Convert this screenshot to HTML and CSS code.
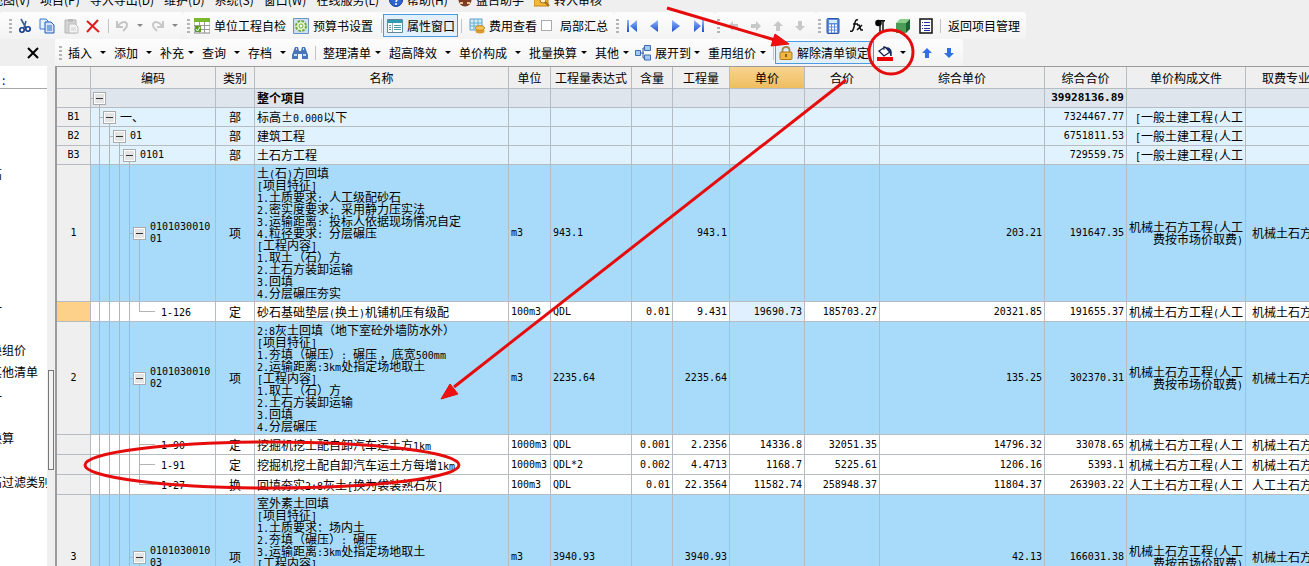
FILE: index.html
```html
<!DOCTYPE html>
<html lang="zh-CN">
<head>
<meta charset="utf-8">
<title>工程计价</title>
<link rel="stylesheet" href="styles.css">
</head>
<body>
<svg class="defs" aria-hidden="true">
  <defs>
    <linearGradient id="blue" x1="0" y1="0" x2="0" y2="1"><stop offset="0" stop-color="#8fb8ff"/><stop offset="1" stop-color="#1f50c8"/></linearGradient>
    <symbol id="caret" viewBox="0 0 6 3"><path d="M0 0h6L3 3z" fill="currentColor"/></symbol>
    <symbol id="cut" viewBox="0 0 16 16"><path d="M4 1l5 9M9 3L7 10" stroke="#3c5f8c" stroke-width="1.6" fill="none"/><circle cx="5" cy="12" r="2.2" fill="none" stroke="#12398e" stroke-width="1.6"/><circle cx="11" cy="11" r="2.2" fill="none" stroke="#12398e" stroke-width="1.6"/></symbol>
    <symbol id="copy" viewBox="0 0 16 16"><path d="M1 1h6l2 2v8H1z" fill="#e4f0fd" stroke="#3c78c8"/><path d="M6 4h6l3 3v8H6z" fill="#cfe3fb" stroke="#1c5cb8"/><path d="M8 8h5M8 10h5M8 12h5" stroke="#2c6cc8"/></symbol>
    <symbol id="paste" viewBox="0 0 16 16"><path d="M2 2h11v13H2z" fill="#d4d4d4" stroke="#b4b4b4"/><path d="M5 1h5v3H5z" fill="#bbb"/><path d="M6 6h6l3 3v6H6z" fill="#f4f4f4" stroke="#bdbdbd"/><path d="M8 10h5M8 12h5" stroke="#ccc"/></symbol>
    <symbol id="delete" viewBox="0 0 16 16"><path d="M2 3l12 11M13 2L2 14" stroke="#dc1e1e" stroke-width="2" fill="none"/></symbol>
    <symbol id="undo" viewBox="0 0 16 16"><path d="M2 3v6h6M3 8c3-5 9-5 9-1 0 3-2 4-4 6" stroke="#c4c4c4" stroke-width="2" fill="none"/></symbol>
    <symbol id="redo" viewBox="0 0 16 16"><path d="M13 3v6H7M12 8C9 3 3 3 3 7c0 3 2 4 4 6" stroke="#c8c8c8" stroke-width="2" fill="none"/></symbol>
    <symbol id="check-table" viewBox="0 0 16 16"><path d="M0 1h16v14H0z" fill="#fff" stroke="#888"/><path d="M0 0h16v4H0z" fill="#7cb82c"/><path d="M0 7.500h16M0 11.500h16M5.500 4v11M10.500 4v11" stroke="#999"/><path d="M1 8h6v6H1z" fill="#5aa01c"/><path d="M2 11l1.500 2L6 9" stroke="#fff" fill="none"/></symbol>
    <symbol id="gear" viewBox="0 0 16 16"><path d="M.5 .5h15v15H.5z" fill="#cfe0f4" stroke="#6b93c4"/><circle cx="8" cy="8" r="5" fill="#e7f6cf" stroke="#6cac3c" stroke-width="2" stroke-dasharray="2.600 1.300"/><circle cx="8" cy="8" r="2" fill="#fff" stroke="#6cac3c"/></symbol>
    <symbol id="props" viewBox="0 0 16 14"><path d="M.5 .5h15v13H.5z" fill="#fff" stroke="#62869a"/><path d="M1 1h14v3H1z" fill="#2e9ab4"/><path d="M5.500 4v9" stroke="#9ab"/><path d="M2 6.500h2M2 8.500h2M2 10.500h2M7 6.500h7M7 8.500h7M7 10.500h7" stroke="#4d9cac"/></symbol>
    <symbol id="fees" viewBox="0 0 16 16"><path d="M1 1h12v11H1z" fill="#d8ecfa" stroke="#5da0cc"/><path d="M1 5h12M1 8h12M5 1v11M9 1v11" stroke="#64b0cc"/><ellipse cx="11" cy="13" rx="4.500" ry="2.500" fill="#dc9a2c"/><ellipse cx="11" cy="10" rx="4.500" ry="2.300" fill="#f4c458" stroke="#c4861c"/></symbol>
    <symbol id="first" viewBox="0 0 12 14"><path d="M1 1h2v12H1zM11 1v12L4 7z" fill="url(#blue)"/></symbol>
    <symbol id="prev" viewBox="0 0 12 14"><path d="M9 1v12L1 7z" fill="url(#blue)"/></symbol>
    <symbol id="next" viewBox="0 0 12 14"><path d="M1 1v12l8-6z" fill="url(#blue)"/></symbol>
    <symbol id="last" viewBox="0 0 12 14"><path d="M1 1v12l7-6zM9 1h2v12H9z" fill="url(#blue)"/></symbol>
    <symbol id="left" viewBox="0 0 12 12"><path d="M6 1v3h5v4H6v3L1 6z"/></symbol>
    <symbol id="right" viewBox="0 0 12 12"><path d="M6 1v3H1v4h5v3l5-5z"/></symbol>
    <symbol id="up" viewBox="0 0 12 12"><path d="M6 1L1 6h3v5h4V6h3z"/></symbol>
    <symbol id="down" viewBox="0 0 12 12"><path d="M6 11L1 6h3V1h4v5h3z"/></symbol>
    <symbol id="calc" viewBox="0 0 14 16"><rect x="1" y=".5" width="12" height="15" rx="1" fill="#5c8cdc" stroke="#2c54a4"/><path d="M3 2h8v3H3z" fill="#d4ecff"/><path d="M3 7.500h8M3 10.500h8M3 13.500h8" stroke="#fff" stroke-width="2" stroke-dasharray="2 1"/></symbol>
    <symbol id="fx" viewBox="0 0 14 14"><path d="M8 1C5 0 5 4 4 8s-2 5-4 4M3 5h5M7 6l2 0 2 5 2 0M12 6l-5 5" stroke="#111" stroke-width="1.500" fill="none"/></symbol>
    <symbol id="pilcrow" viewBox="0 0 12 14"><path d="M5 1h6v1.500H5z"/><circle cx="4.500" cy="4" r="3.300"/><path d="M6 1v12M9 1v12" stroke="#111" stroke-width="1.500"/></symbol>
    <symbol id="cube" viewBox="0 0 16 16"><path d="M1 5l4-4h10l-4 4z" fill="#8ccf8c"/><path d="M1 5h10v10H1z" fill="#4c9c58"/><path d="M11 5l4-4v10l-4 4z" fill="#1c6434"/></symbol>
    <symbol id="list" viewBox="0 0 14 16"><path d="M1 1h12v14H1z" fill="#fff" stroke="#111" stroke-width="1.500"/><path d="M3 4.500h1M3 7.500h1M3 10.500h1M5 4.500h6M5 7.500h6M5 10.500h6M5 12.500h6" stroke="#2030a0"/></symbol>
    <symbol id="find" viewBox="0 0 16 14"><path d="M3 1h3l1 4h2l1-4h3l3 8v4h-6V8H6v5H0V9z" fill="#4874b8"/><path d="M2 9h3M11 9h3M4 3h1M11 3h1" stroke="#c8dcf8" stroke-width="2"/></symbol>
    <symbol id="tree" viewBox="0 0 16 16"><path d="M5 8h4M8 3v10M8 3h2M8 13h2" stroke="#345c9c" fill="none"/><path d="M.5 5.500h5v5h-5zM9.500 .5h6v5h-6zM9.500 10h6v5h-6z" fill="#a4c8f8" stroke="#3c6cb8"/></symbol>
    <symbol id="lock" viewBox="0 0 14 14"><path d="M3.500 7V4c0-4 7-4 7 0v3" stroke="#a08850" stroke-width="1.800" fill="none"/><rect x="1" y="6" width="12" height="7.500" rx="1" fill="#f0b840" stroke="#b07c20"/><path d="M7 8v3" stroke="#70480c" stroke-width="1.600"/></symbol>
    <symbol id="bucket" viewBox="0 0 16 16"><path d="M2 6l6-4 5 5-6 4z" fill="#fff" stroke="#14204c" stroke-width="1.300"/><path d="M7 5V1M9 3c4-1 6 2 5 8-1-4-2-5-5-8z" fill="#14308c" stroke="#14204c"/><path d="M0 12h16v4H0z" fill="#f00000"/></symbol>
    <symbol id="help" viewBox="0 0 14 14"><circle cx="7" cy="7" r="6.500" fill="#2c64d4" stroke="#163c94"/><path d="M5 5c0-3 4-3 4 0 0 2-2 2-2 4M7 10v2" stroke="#fff" stroke-width="1.500" fill="none"/></symbol>
    <symbol id="robot" viewBox="0 0 14 14"><circle cx="7" cy="7" r="6.500" fill="#7c3c24"/><path d="M2 9h3v2H2zM9 9h3v2H9z" fill="#f4c49c"/></symbol>
    <symbol id="audit" viewBox="0 0 16 14"><path d="M0 2h14v11H0z" fill="#f4b838" stroke="#c4841c"/><circle cx="9" cy="7" r="3" fill="#fff4cc" stroke="#a06c18"/><path d="M11 9l4 4" stroke="#a06c18" stroke-width="2"/></symbol>
  </defs>
</svg>

<div class="app">
  <nav class="menubar">
    <button>视图(V)</button><button>项目(P)</button><button>导入导出(D)</button><button>维护(D)</button><button>系统(S)</button><button>窗口(W)</button><button>在线服务(L)</button><button><svg class="i14"><use href="#help"/></svg>帮助(H)</button><button><svg class="i14"><use href="#robot"/></svg>盘古助手</button><button><svg class="i16"><use href="#audit"/></svg>转入审核</button>
  </nav>

  <div class="toolbar">
    <div class="group g-edit">
      <i class="grip"></i>
      <button aria-label="剪切"><svg class="i16"><use href="#cut"/></svg></button>
      <button aria-label="复制"><svg class="i16"><use href="#copy"/></svg></button>
      <button aria-label="粘贴"><svg class="i16"><use href="#paste"/></svg></button>
      <button aria-label="删除"><svg class="i16"><use href="#delete"/></svg></button>
      <i class="sep"></i>
      <button aria-label="撤销"><svg class="i16"><use href="#undo"/></svg></button>
      <button class="dim" aria-label="撤销列表"><svg class="caret"><use href="#caret"/></svg></button>
      <button aria-label="重做"><svg class="i16"><use href="#redo"/></svg></button>
      <button class="dim" aria-label="重做列表"><svg class="caret"><use href="#caret"/></svg></button>
    </div>
    <div class="group g-project">
      <i class="grip"></i>
      <button><svg class="i16"><use href="#check-table"/></svg>单位工程自检</button>
      <button><svg class="i16"><use href="#gear"/></svg>预算书设置</button>
      <i class="sep"></i>
      <button class="active"><svg class="i16"><use href="#props"/></svg>属性窗口</button>
      <i class="sep"></i>
      <button><svg class="i16"><use href="#fees"/></svg>费用查看</button>
      <label class="check"><input type="checkbox">局部汇总</label>
    </div>
    <div class="group g-nav">
      <i class="grip"></i>
      <button aria-label="首条"><svg class="nav"><use href="#first"/></svg></button>
      <button aria-label="上一条"><svg class="nav"><use href="#prev"/></svg></button>
      <button aria-label="下一条"><svg class="nav"><use href="#next"/></svg></button>
      <button aria-label="末条"><svg class="nav"><use href="#last"/></svg></button>
    </div>
    <div class="group g-nav dim">
      <i class="grip"></i>
      <button aria-label="左移"><svg class="i12"><use href="#left"/></svg></button>
      <button aria-label="右移"><svg class="i12"><use href="#right"/></svg></button>
      <button aria-label="上移"><svg class="i12"><use href="#up"/></svg></button>
      <button aria-label="下移"><svg class="i12"><use href="#down"/></svg></button>
    </div>
    <div class="group g-tools">
      <i class="grip"></i>
      <button aria-label="计算器"><svg class="i16"><use href="#calc"/></svg></button>
      <button aria-label="函数"><svg class="i14"><use href="#fx"/></svg></button>
      <button aria-label="段落"><svg class="i14"><use href="#pilcrow"/></svg></button>
      <button aria-label="模型"><svg class="i16"><use href="#cube"/></svg></button>
      <button aria-label="清单"><svg class="i16"><use href="#list"/></svg></button>
      <i class="sep"></i>
      <button>返回项目管理</button>
    </div>
  </div>

  <div class="workspace">
    <aside class="side">
      <div class="side-head"><button aria-label="关闭"><svg class="i12" viewBox="0 0 12 12"><path d="M1 1l10 10M11 1L1 11" stroke="#000" stroke-width="2"/></svg></button></div>
      <div class="side-body">
        <div class="side-title">:</div>
        <ul class="side-list"><li>高</li><li>一</li><li>、</li><li>换组价</li><li>其他清单</li><li>一</li><li>换算</li><li>高过滤类别</li></ul>
      </div>
    </aside>
    <div class="splitter"><span class="handle"></span></div>

    <main class="main">
      <div class="toolbar">
        <div class="group g-rows">
          <i class="grip"></i>
          <button>插入</button><svg class="caret"><use href="#caret"/></svg>
          <button>添加</button><svg class="caret"><use href="#caret"/></svg>
          <button>补充</button><svg class="caret"><use href="#caret"/></svg>
          <button>查询</button><svg class="caret"><use href="#caret"/></svg>
          <button>存档</button><svg class="caret"><use href="#caret"/></svg>
          <button aria-label="查找"><svg class="i16"><use href="#find"/></svg></button>
          <i class="sep"></i>
          <button>整理清单</button><svg class="caret"><use href="#caret"/></svg>
          <button>超高降效</button><svg class="caret"><use href="#caret"/></svg>
          <button>单价构成</button><svg class="caret"><use href="#caret"/></svg>
          <button>批量换算</button><svg class="caret"><use href="#caret"/></svg>
          <button>其他</button><svg class="caret"><use href="#caret"/></svg>
          <button><svg class="i16"><use href="#tree"/></svg>展开到</button><svg class="caret"><use href="#caret"/></svg>
          <button>重用组价</button><svg class="caret"><use href="#caret"/></svg>
          <i class="sep"></i>
          <button class="active"><svg class="i14"><use href="#lock"/></svg>解除清单锁定</button>
          <button aria-label="填充颜色"><svg class="i16"><use href="#bucket"/></svg></button><svg class="caret"><use href="#caret"/></svg>
          <button class="move" aria-label="上移"><svg class="i12"><use href="#up"/></svg></button>
          <button class="move" aria-label="下移"><svg class="i12"><use href="#down"/></svg></button>
        </div>
      </div>

      <div class="grid-wrap">
        <table class="grid">
          <colgroup><col class="c-idx"><col class="c-code"><col class="c-type"><col class="c-name"><col class="c-unit"><col class="c-expr"><col class="c-rate"><col class="c-qty"><col class="c-price"><col class="c-price"><col><col class="c-sum"><col class="c-file"><col class="c-major"></colgroup>
          <thead>
            <tr><th></th><th>编码</th><th>类别</th><th>名称</th><th>单位</th><th>工程量表达式</th><th>含量</th><th>工程量</th><th class="current">单价</th><th>合价</th><th>综合单价</th><th>综合合价</th><th>单价构成文件</th><th>取费专业</th></tr>
          </thead>
          <tbody>
            <tr class="total"><th></th><td class="code l0"><div><button class="toggle" aria-label="折叠"></button></div></td><td></td><td>整个项目</td><td></td><td></td><td></td><td></td><td></td><td></td><td></td><td class="num">39928136.89</td><td></td><td></td></tr>
            <tr class="part"><th>B1</th><td class="code l1"><div><button class="toggle" aria-label="折叠"></button><span>一、</span></div></td><td class="mid">部</td><td>标高±<span class="n">0.000</span>以下</td><td></td><td></td><td></td><td></td><td></td><td></td><td></td><td class="num">7324467.77</td><td class="file"><span class="n">[</span>一般土建工程<span class="n">(</span>人工</td><td></td></tr>
            <tr class="part"><th>B2</th><td class="code l2"><div><button class="toggle" aria-label="折叠"></button><span class="n">01</span></div></td><td class="mid">部</td><td>建筑工程</td><td></td><td></td><td></td><td></td><td></td><td></td><td></td><td class="num">6751811.53</td><td class="file"><span class="n">[</span>一般土建工程<span class="n">(</span>人工</td><td></td></tr>
            <tr class="part"><th>B3</th><td class="code l3"><div><button class="toggle" aria-label="折叠"></button><span class="n">0101</span></div></td><td class="mid">部</td><td>土石方工程</td><td></td><td></td><td></td><td></td><td></td><td></td><td></td><td class="num">729559.75</td><td class="file"><span class="n">[</span>一般土建工程<span class="n">(</span>人工</td><td></td></tr>
            <tr class="item"><th>1</th><td class="code l4"><div><button class="toggle" aria-label="折叠"></button><span class="n">0101030010<br>01</span></div></td><td class="mid">项</td>
              <td>土<span class="n">(</span>石<span class="n">)</span>方回填<br><span class="n">[</span>项目特征<span class="n">]</span><br><span class="n">1.</span>土质要求<span class="n">: </span>人工级配砂石<br><span class="n">2.</span>密实度要求<span class="n">: </span>采用静力压实法<br><span class="n">3.</span>运输距离<span class="n">: </span>投标人依据现场情况自定<br><span class="n">4.</span>粒径要求<span class="n">: </span>分层碾压<br><span class="n">[</span>工程内容<span class="n">]</span><br><span class="n">1.</span>取土（石）方<br><span class="n">2.</span>土石方装卸运输<br><span class="n">3.</span>回填<br><span class="n">4.</span>分层碾压夯实</td>
              <td class="unit">m3</td><td class="expr">943.1</td><td></td><td class="num">943.1</td><td></td><td></td><td class="num">203.21</td><td class="num">191647.35</td><td class="file">机械土石方工程<span class="n">(</span>人工<br>费按市场价取费<span class="n">)</span></td><td class="major">机械土石方工程</td></tr>
            <tr class="quota selected"><th></th><td class="code leaf end"><span class="n">1-126</span></td><td class="mid">定</td><td>砂石基础垫层<span class="n">(</span>换土<span class="n">)</span>机铺机压有级配</td><td class="unit">100m3</td><td class="expr">QDL</td><td class="num">0.01</td><td class="num">9.431</td><td class="num current">19690.73</td><td class="num">185703.27</td><td class="num">20321.85</td><td class="num">191655.37</td><td class="file">机械土石方工程<span class="n">(</span>人工</td><td class="major">机械土石方工程</td></tr>
            <tr class="item"><th>2</th><td class="code l4"><div><button class="toggle" aria-label="折叠"></button><span class="n">0101030010<br>02</span></div></td><td class="mid">项</td>
              <td><span class="n">2:8</span>灰土回填（地下室砼外墙防水外）<br><span class="n">[</span>项目特征<span class="n">]</span><br><span class="n">1.</span>夯填（碾压）<span class="n">: </span>碾压 ，底宽<span class="n">500mm</span><br><span class="n">2.</span>运输距离<span class="n">:3km</span>处指定场地取土<br><span class="n">[</span>工程内容<span class="n">]</span><br><span class="n">1.</span>取土（石）方<br><span class="n">2.</span>土石方装卸运输<br><span class="n">3.</span>回填<br><span class="n">4.</span>分层碾压</td>
              <td class="unit">m3</td><td class="expr">2235.64</td><td></td><td class="num">2235.64</td><td></td><td></td><td class="num">135.25</td><td class="num">302370.31</td><td class="file">机械土石方工程<span class="n">(</span>人工<br>费按市场价取费<span class="n">)</span></td><td class="major">机械土石方工程</td></tr>
            <tr class="quota"><th></th><td class="code leaf"><span class="n">1-90</span></td><td class="mid">定</td><td>挖掘机挖土配自卸汽车运土方<span class="n">1km</span></td><td class="unit">1000m3</td><td class="expr">QDL</td><td class="num">0.001</td><td class="num">2.2356</td><td class="num">14336.8</td><td class="num">32051.35</td><td class="num">14796.32</td><td class="num">33078.65</td><td class="file">机械土石方工程<span class="n">(</span>人工</td><td class="major">机械土石方工程</td></tr>
            <tr class="quota"><th></th><td class="code leaf"><span class="n">1-91</span></td><td class="mid">定</td><td>挖掘机挖土配自卸汽车运土方每增<span class="n">1km</span></td><td class="unit">1000m3</td><td class="expr">QDL*2</td><td class="num">0.002</td><td class="num">4.4713</td><td class="num">1168.7</td><td class="num">5225.61</td><td class="num">1206.16</td><td class="num">5393.1</td><td class="file">机械土石方工程<span class="n">(</span>人工</td><td class="major">机械土石方工程</td></tr>
            <tr class="quota"><th></th><td class="code leaf end"><span class="n">1-27</span></td><td class="mid">换</td><td>回填夯实<span class="n">2:8</span>灰土<span class="n">[</span>换为袋装熟石灰<span class="n">]</span></td><td class="unit">100m3</td><td class="expr">QDL</td><td class="num">0.01</td><td class="num">22.3564</td><td class="num">11582.74</td><td class="num">258948.37</td><td class="num">11804.37</td><td class="num">263903.22</td><td class="file">人工土石方工程<span class="n">(</span>人工</td><td class="major">人工土石方工程</td></tr>
            <tr class="item"><th>3</th><td class="code l4"><div><button class="toggle" aria-label="折叠"></button><span class="n">0101030010<br>03</span></div></td><td class="mid">项</td>
              <td>室外素土回填<br><span class="n">[</span>项目特征<span class="n">]</span><br><span class="n">1.</span>土质要求：场内土<br><span class="n">2.</span>夯填（碾压）<span class="n">: </span>碾压<br><span class="n">3.</span>运输距离<span class="n">:3km</span>处指定场地取土<br><span class="n">[</span>工程内容<span class="n">]</span><br><span class="n">1.</span>取土（石）方<br><span class="n">2.</span>土石方装卸运输<br><span class="n">3.</span>回填<br><span class="n">4.</span>分层碾压</td>
              <td class="unit">m3</td><td class="expr">3940.93</td><td></td><td class="num">3940.93</td><td></td><td></td><td class="num">42.13</td><td class="num">166031.38</td><td class="file">机械土石方工程<span class="n">(</span>人工<br>费按市场价取费<span class="n">)</span></td><td class="major">机械土石方工程</td></tr>
          </tbody>
        </table>
      </div>
    </main>
  </div>

  <svg class="marks" aria-hidden="true">
    <g fill="none" stroke="#e60c0c" stroke-width="3">
      <path d="M667 8l108 32"/><path d="M846 80L454 387" />
      <circle cx="891" cy="52" r="22"/>
      <ellipse cx="272" cy="465" rx="187" ry="23"/>
    </g>
    <path d="M789 44l-18 2 4-12zM441 399l9-15 8 10z" fill="#f01010" stroke="#e60c0c"/>
  </svg>
</div>
</body>
</html>
```
FILE: styles.css
```css
* { box-sizing: border-box; }

body {
  margin: 0;
  font: 12px/16px "Noto Sans CJK SC", sans-serif;
  color: #000;
  background: #efefef;
}

button {
  display: flex;
  align-items: center;
  gap: 4px;
  padding: 0;
  border: 0;
  background: none;
  color: inherit;
  font: inherit;
  white-space: nowrap;
}

svg { flex: none; }
.defs { position: absolute; width: 0; height: 0; }
.i12 { width: 12px; height: 12px; }
.i14 { width: 14px; height: 14px; }
.i16 { width: 16px; height: 16px; }
.nav { width: 12px; height: 14px; }
.caret { width: 6px; height: 3px; }

.app {
  position: relative;
  display: flex;
  flex-direction: column;
  height: 100vh;
  overflow: hidden;
}

/* Menu */
.menubar {
  display: flex;
  align-items: flex-end;
  gap: 10px;
  height: 12px;
  margin-left: -9px;
  padding-bottom: 4px;
  flex: none;
}

/* Toolbars */
.toolbar {
  display: flex;
  flex: none;
  height: 27px;
}
.group {
  display: grid;
  align-items: center;
  border-radius: 3px;
  background: linear-gradient(#fdfdfd, #f3f3f3);
}
.g-edit { padding-left: 9px; grid-template-columns: 8px 22px 24px 22px 23px 7px 22px 13px 22px 11px; }
.g-project { padding-left: 4px; grid-template-columns: 7px 99px 88px 2px 78px 8px 72px 73px; }
.g-nav { padding-left: 2px; grid-template-columns: 10px 23px 22px 22px 22px; }
.g-tools { padding-left: 2px; grid-template-columns: 7px 25px 23px 22px 23px 22px 8px 78px; }
.g-rows {
  padding-left: 4px;
  grid-template-columns:
    9px 32px 14px 32px 14px 28px 14px 32px 14px 32px 12px 23px 8px
    52px 14px 56px 14px 56px 14px 52px 14px 28px 12px 59px 14px 52px 13px
    2px 102px 23px 21px 22px 20px;
}

.grip {
  width: 3px;
  height: 14px;
  background: repeating-linear-gradient(#b4b4b4 0 2px, transparent 2px 4px);
}
.sep { width: 1px; height: 14px; background: #c4c4c4; }
.dim { color: #888; fill: #c8c8c8; }
.move { fill: #3070e0; }
.active {
  height: 23px;
  margin-right: 3px;
  padding-left: 3px;
  border: 1px solid #4c9ce4;
  background: #e2f0fc;
  overflow: hidden;
}
.check { display: flex; align-items: center; gap: 8px; }
.check input {
  appearance: none;
  width: 11px;
  height: 11px;
  margin: 0;
  border: 1px solid #aaa;
  background: #fff;
}

/* Panels */
.workspace { display: flex; flex: 1; min-height: 0; }
.side { display: flex; flex-direction: column; width: 47px; flex: none; }
.side-head { display: flex; align-items: center; justify-content: flex-end; height: 27px; padding-right: 8px; }
.side-body { flex: 1; overflow: hidden; background: #fff; }
.side-title { height: 23px; padding: 6px 2px 0; border-bottom: 1px solid #a8a8a8; color: #0000a0; line-height: 16px; }
.side-list {
  display: grid;
  grid-template-rows: 93px 134px 25px 17px 22px 25px 41px 44px;
  align-items: end;
  margin: 0;
  padding: 0;
  list-style: none;
  text-indent: -10px;
  white-space: nowrap;
}
.splitter { display: flex; align-items: flex-start; width: 8px; flex: none; padding: 331px 1px 0; }
.handle { width: 6px; height: 100px; border: 1px solid #777; background: #f4f4f4; }
.main { display: flex; flex-direction: column; flex: 1; min-width: 0; }

/* Grid */
.grid-wrap { flex: 1; overflow: hidden; border: solid #9c9c9c; border-width: 1px 0 0 2px; }
.grid {
  width: calc(100% + 18px);
  table-layout: fixed;
  border-collapse: separate;
  border-spacing: 0;
  line-height: 12px;
}
.c-idx { width: 34px; }
.c-code { width: 125px; }
.c-type { width: 39px; }
.c-name { width: 254px; }
.c-unit { width: 42px; }
.c-expr, .c-major { width: 81px; }
.c-rate { width: 41px; }
.c-qty { width: 57px; }
.c-price { width: 75px; }
.c-sum { width: 82px; }
.c-file { width: 119px; }

.grid th, .grid td {
  padding: 0 2px;
  border: solid #b6bcc2;
  border-width: 0 1px 1px 0;
  white-space: nowrap;
  overflow: hidden;
  vertical-align: middle;
  text-align: left;
  font-weight: normal;
}
.grid th { background: #efefef; text-align: center; }
.grid tbody th, .n, .num, .unit, .expr { font-family: "DejaVu Sans Mono", monospace; font-size: 10px; }
.n { line-height: 8px; }
.code .n { line-height: 12px; }
.grid thead tr { height: 22px; }
.grid thead .current { background: linear-gradient(#f8d48e, #efbd60); }
.total, .part { height: 19px; }
.quota { height: 20px; }
.item { height: 137px; }
.item ~ .item { height: 113px; }
.grid .item:last-child { height: 125px; }
.total td { background-color: #dee5ed; font-weight: bold; }
.grid .total .num { font-size: 11px; }
.part td { background-color: #e0f2fe; }
.item td { background-color: #a8dbfa; }
.quota td { background-color: #fff; }
.grid .selected th { background: #fdd18a; }
.grid .selected .current { background-color: #e0f0fe; }
.grid .mid { text-align: center; }
.grid .num, .grid .file { text-align: right; }
.grid .major { padding-left: 6px; }

/* Tree column: repeating guides for the ancestors, one stub for the node */
.grid .code {
  --level: 0;
  padding-left: calc(var(--level) * 10px + 2px);
  background-repeat: no-repeat;
  background-image:
    repeating-linear-gradient(to right, transparent 0 8px, #b4b4b4 8px 9px, transparent 9px 10px),
    linear-gradient(#b4b4b4, #b4b4b4),
    linear-gradient(#b4b4b4, #b4b4b4);
  background-size: calc(var(--level) * 10px) 100%, 1px 50%, 5px 1px;
  background-position: 0 0, calc(var(--level) * 10px + 8px) 100%, calc(var(--level) * 10px - 2px) 50%;
}
.grid .l1 { --level: 1; }
.grid .l2 { --level: 2; }
.grid .l3 { --level: 3; }
.grid .l4 { --level: 4; }
.code div { display: flex; align-items: center; gap: 4px; }
.grid .leaf {
  --level: 4;
  padding-left: 70px;
  background-size: 40px 100%, 1px 100%, 16px 1px;
  background-position: 0 0, 48px 0, 48px 50%;
}
.grid .end { background-size: 40px 100%, 1px 50%, 16px 1px; }
.toggle {
  width: 13px;
  height: 13px;
  border: 2px solid #fff;
  outline: 1px solid #aaa;
  outline-offset: -1px;
  background: linear-gradient(#333, #333) center / 7px 1px no-repeat #e4e4e4;
}

/* Review marks drawn over the window */
.marks { position: absolute; inset: 0; width: 100%; height: 100%; pointer-events: none; }
```
